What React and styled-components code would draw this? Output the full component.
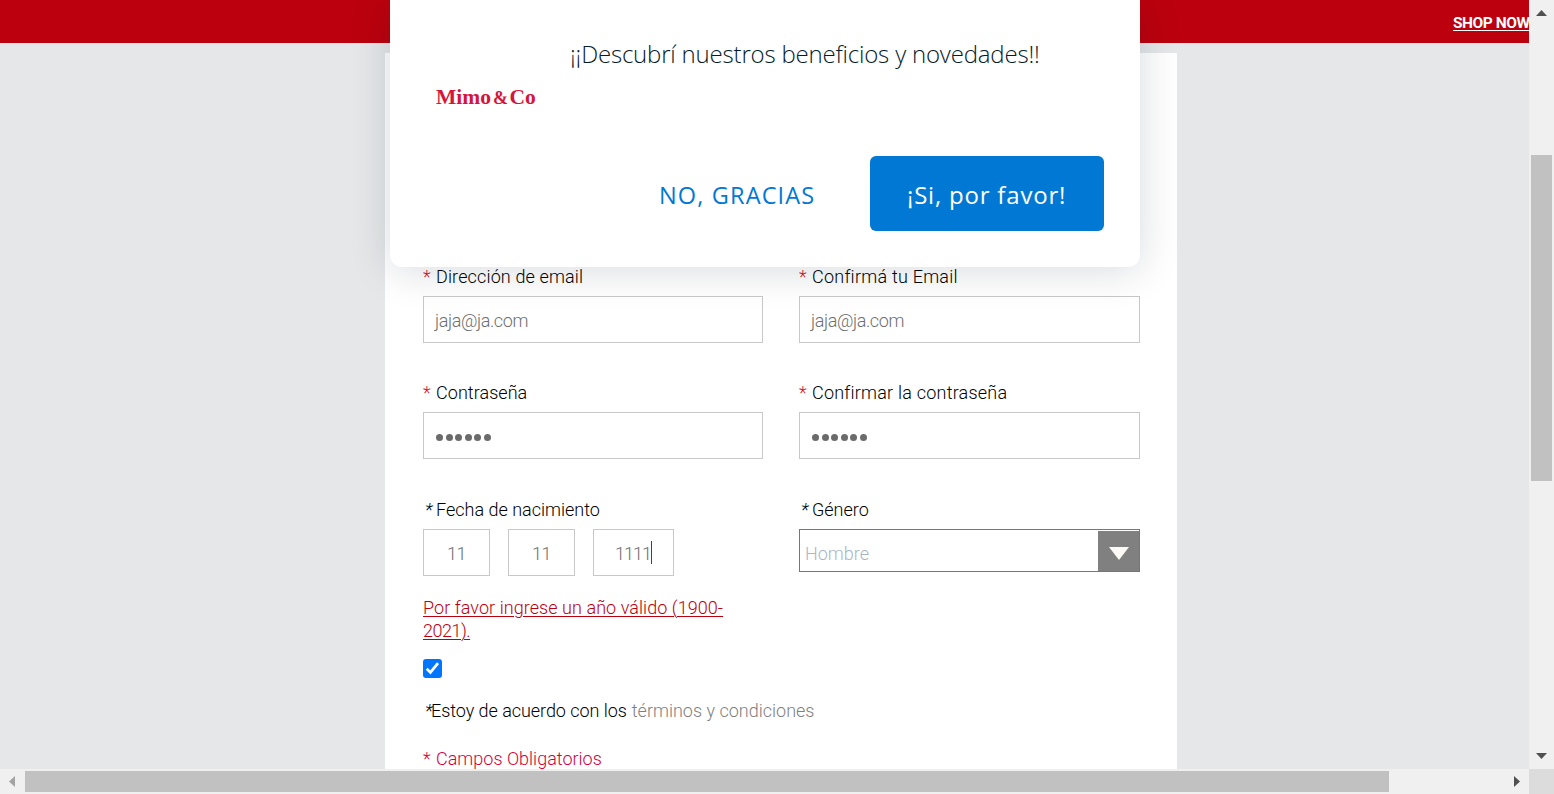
import React from "react";
import styled, { createGlobalStyle } from "styled-components";

const GlobalStyle = createGlobalStyle`
  * { box-sizing: border-box; }
  body { margin: 0; overflow: hidden; }
`;

const Window = styled.div`
  display: grid;
  grid-template-columns: 1529px 25px;
  grid-template-rows: 769px 25px;
  width: 1554px;
  height: 794px;
  font-family: Roboto, "Liberation Sans", sans-serif;
  font-weight: 300;
  font-size: 18px;
  line-height: 23px;
  color: #000;
`;

const Page = styled.main`
  position: relative;
  overflow: hidden;
  background: #e5e7e9;
`;

const PromoBar = styled.div`
  display: flex;
  justify-content: flex-end;
  height: 43px;
  padding-top: 12px;
  background: #bc000e;
`;

const PromoLink = styled.a`
  flex: none;
  width: 76px;
  color: #fff;
  font-size: 15.5px;
  font-weight: 700;
  letter-spacing: -0.45px;
  white-space: nowrap;
  text-decoration: underline;
  text-underline-offset: 2px;
  text-decoration-thickness: 1px;
`;

const Card = styled.div`
  width: 792px;
  height: 760px;
  margin: 10px 0 0 385px;
  padding: 212px 37px 0 38px;
  background: #fff;
`;

const Fields = styled.div`
  display: grid;
  grid-template-columns: 340px 341px;
  grid-template-rows: 116px 117px auto;
  column-gap: 36px;
`;

const Field = styled.div`
  display: flex;
  flex-direction: column;
`;

const Label = styled.label`
  display: flex;
  height: 31px;
  white-space: nowrap;
  color: ${(p) => p.$color || "#000"};
`;

const Star = styled.span`
  width: 13px;
  flex: none;
  color: ${(p) => p.$color || "#000"};
  font-style: ${(p) => (p.$italic ? "italic" : "normal")};
  padding-left: ${(p) => (p.$italic ? 2 : 0)}px;
`;

const Text = styled.span`
  letter-spacing: ${(p) => p.$ls || 0}px;
  white-space: nowrap;
`;

const Input = styled.div`
  display: flex;
  align-items: center;
  height: 47px;
  width: ${(p) => p.$w || "100%"};
  padding: 1px 0 0 ${(p) => p.$pad || 11}px;
  border: 1px solid #c8c8c8;
  color: #6e6e6e;
`;

const DateRow = styled.div`
  display: flex;
  gap: 18px;
`;

const Caret = styled.span`
  width: 1px;
  height: 23px;
  margin: 0 0 1px;
  background: #444;
`;

const Dots = styled.span`
  display: flex;
  gap: 2.6px;
  padding: 2px 0 0 1px;
`;

const Dot = styled.span`
  width: 7px;
  height: 7px;
  border-radius: 50%;
  background: #6b6b6b;
`;

const Select = styled.div`
  display: flex;
  justify-content: space-between;
  height: 43px;
  padding: 1px 0 0 5px;
  border: 1px solid #767676;
  color: #a9b5c6;
`;

const SelectValue = styled.span`
  padding-top: 11px;
`;

const SelectArrow = styled.span`
  display: flex;
  align-items: center;
  justify-content: center;
  width: 41px;
  padding: 4px 0 0 1px;
  background: #808080;
`;

const ErrorText = styled.p`
  margin: 20px 0 0;
  color: #bc000e;
  text-decoration: underline;
  text-decoration-thickness: 1px;
  text-underline-offset: 2px;
`;

const Checkbox = styled.span`
  display: flex;
  width: 19px;
  height: 19px;
  margin-top: 17px;
  border-radius: 3px;
  background: #0075ff;
`;

const Terms = styled.p`
  display: flex;
  margin: 21px 0 0;
  white-space: nowrap;
`;

const TermsStar = styled(Star)`
  width: 8px;
`;

const TermsLink = styled.a`
  margin-left: 5px;
  color: #7f7f7f;
`;

const Required = styled.div`
  margin-top: 25px;
`;

const Dialog = styled.aside`
  position: absolute;
  top: 0;
  left: 390px;
  width: 750px;
  height: 267px;
  padding: 0 36px 0 46px;
  border-radius: 0 0 12px 12px;
  background: #fff;
  box-shadow: 0 3px 42px rgba(5, 27, 44, 0.16);
  font-family: "Open Sans", "Noto Sans", sans-serif;
  color: #051b2c;
`;

const DialogBody = styled.div`
  display: flex;
  height: 156px;
`;

const Logo = styled.div`
  width: 134px;
  padding-top: 85px;
  font-family: "Liberation Serif", serif;
  font-weight: 700;
  font-size: 21.5px;
  line-height: 24px;
  color: #d7143a;
  white-space: nowrap;
`;

const Ampersand = styled.span`
  margin: 0 1.5px 0 2px;
  font-size: 18px;
`;

const Message = styled.p`
  margin: 37px 0 0;
  font-size: 24px;
  line-height: 34px;
  white-space: nowrap;
  letter-spacing: -0.19px;
`;

const Actions = styled.div`
  display: flex;
  justify-content: flex-end;
`;

const Decline = styled.button`
  width: 211px;
  padding: 3px 0 0;
  border: 0;
  background: none;
  text-align: left;
  font: 400 23.5px "Open Sans", sans-serif;
  color: #0078d4;
  white-space: nowrap;
  letter-spacing: 1.15px;
`;

const Accept = styled.button`
  width: 234px;
  height: 75px;
  padding: 2px 0 0 37px;
  border: 0;
  border-radius: 6px;
  background: #0078d4;
  color: #fff;
  text-align: left;
  font: 500 24px "Open Sans", sans-serif;
  white-space: nowrap;
  letter-spacing: 0.8px;
`;

const VScroll = styled.div`
  display: flex;
  flex-direction: column;
  align-items: center;
  background: #f0f0f0;
`;

const VTrack = styled.div`
  flex: 1;
  padding: 138px 0 0;
`;

const VThumb = styled.div`
  width: 21px;
  height: 326px;
  background: #c1c1c1;
`;

const HScroll = styled.div`
  display: flex;
  align-items: center;
  background: #f0f0f0;
`;

const HThumb = styled.div`
  width: 1364px;
  height: 21px;
  margin-right: auto;
  background: #c1c1c1;
`;

const Corner = styled.div`
  background: #dcdcdc;
`;

const ArrowSvg = styled.svg`
  display: block;
  flex: none;
`;

const red = "#d0122f";

function PasswordDots() {
  return (
    <Dots>
      {[0, 1, 2, 3, 4, 5].map((i) => (
        <Dot key={i} />
      ))}
    </Dots>
  );
}

function FieldLabel({ text, ls, optional }) {
  return (
    <Label>
      <Star $color={optional ? "#000" : red} $italic={optional}>*</Star>
      <Text $ls={ls}>{text}</Text>
    </Label>
  );
}

export default function App() {
  return (
    <Window>
      <GlobalStyle />
      <Page>
        <PromoBar>
          <PromoLink>SHOP NOW</PromoLink>
        </PromoBar>
        <Card>
          <Fields>
            <Field>
              <FieldLabel text="Dirección de email" ls={0.14} />
              <Input><Text $ls={-0.4}>jaja@ja.com</Text></Input>
            </Field>
            <Field>
              <FieldLabel text="Confirmá tu Email" ls={0.24} />
              <Input><Text $ls={-0.4}>jaja@ja.com</Text></Input>
            </Field>
            <Field>
              <FieldLabel text="Contraseña" ls={0.05} />
              <Input><PasswordDots /></Input>
            </Field>
            <Field>
              <FieldLabel text="Confirmar la contraseña" ls={0.22} />
              <Input><PasswordDots /></Input>
            </Field>
            <Field>
              <FieldLabel text="Fecha de nacimiento" optional />
              <DateRow>
                <Input $w="67px" $pad={23}><Text $ls={-0.5}>11</Text></Input>
                <Input $w="67px" $pad={23}><Text $ls={-0.5}>11</Text></Input>
                <Input $w="81px" $pad={21}><Text $ls={-0.95}>1111</Text><Caret /></Input>
              </DateRow>
              <ErrorText>
                <Text $ls={0.06}>Por favor ingrese un año válido (1900-</Text>
                <br />
                <Text $ls={-0.5}>2021).</Text>
              </ErrorText>
            </Field>
            <Field>
              <FieldLabel text="Género" optional />
              <Select>
                <SelectValue><Text>Hombre</Text></SelectValue>
                <SelectArrow>
                  <ArrowSvg width="20" height="13" viewBox="0 0 20 13">
                    <path d="M0 0H20L10 13Z" fill="#fbfaf6" />
                  </ArrowSvg>
                </SelectArrow>
              </Select>
            </Field>
          </Fields>
          <Checkbox>
            <ArrowSvg width="19" height="19" viewBox="0 0 19 19">
              <path d="M3.7 9.8L7.4 13.4L15 4.2" fill="none" stroke="#fff" strokeWidth="2.7" />
            </ArrowSvg>
          </Checkbox>
          <Terms>
            <TermsStar $italic>*</TermsStar>
            <Text $ls={-0.05}>Estoy de acuerdo con los</Text>
            <TermsLink>términos y condiciones</TermsLink>
          </Terms>
          <Required>
            <Label $color="#d4003c">
              <Star $color="#d4003c">*</Star>
              <Text>Campos Obligatorios</Text>
            </Label>
          </Required>
        </Card>
        <Dialog>
          <DialogBody>
            <Logo>Mimo<Ampersand>&amp;</Ampersand>Co</Logo>
            <Message>¡¡Descubrí nuestros beneficios y novedades!!</Message>
          </DialogBody>
          <Actions>
            <Decline>NO, GRACIAS</Decline>
            <Accept>¡Si, por favor!</Accept>
          </Actions>
        </Dialog>
      </Page>
      <VScroll>
        <ArrowSvg width="25" height="17" viewBox="0 0 25 17">
          <path d="M7 16L12.5 10L18 16Z" fill="#505050" />
        </ArrowSvg>
        <VTrack><VThumb /></VTrack>
        <ArrowSvg width="25" height="17" viewBox="0 0 25 17">
          <path d="M7 1H18L12.5 7Z" fill="#505050" />
        </ArrowSvg>
      </VScroll>
      <HScroll>
        <ArrowSvg width="25" height="25" viewBox="0 0 25 25">
          <path d="M15 7V18L9 12.5Z" fill="#a3a3a3" />
        </ArrowSvg>
        <HThumb />
        <ArrowSvg width="25" height="25" viewBox="0 0 25 25">
          <path d="M10 7V18L16 12.5Z" fill="#505050" />
        </ArrowSvg>
      </HScroll>
      <Corner />
    </Window>
  );
}
